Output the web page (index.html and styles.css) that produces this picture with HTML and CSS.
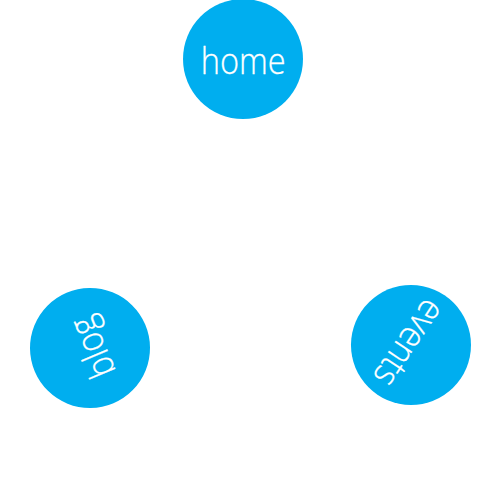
FILE: index.html
```html
<!DOCTYPE html>
<html>
<head>
<meta charset="utf-8">
<link rel="stylesheet" href="styles.css">
</head>
<body>
<nav class="stage">
  <a class="node node-home" href="#"><span class="label">home</span></a>
  <a class="node node-blog" href="#"><span class="label">blog</span></a>
  <a class="node node-events" href="#"><span class="label">events</span></a>
</nav>
</body>
</html>
```
FILE: styles.css
```css
html, body {
  margin: 0;
  padding: 0;
  background: #ffffff;
}
.stage {
  position: relative;
  width: 500px;
  height: 500px;
  overflow: hidden;
}
.node {
  position: absolute;
  width: 120px;
  height: 120px;
  border-radius: 50%;
  background: #00aeef;
  display: flex;
  align-items: center;
  justify-content: center;
  text-decoration: none;
  color: #ffffff;
}
.label {
  font-family: "Open Sans", "DejaVu Sans", sans-serif;
  font-weight: 300;
  font-size: 37px;
  line-height: 1;
  display: block;
  margin-top: 0;
  transform: scaleX(0.88);
  -webkit-text-stroke: 0.3px #ffffff;
}
.node-home {
  left: 183px;
  top: -1px;
}
.node-blog {
  left: 30px;
  top: 288px;
  transform: rotate(247deg);
}
.node-events {
  left: 351px;
  top: 285px;
  transform: rotate(124deg);
}
```
